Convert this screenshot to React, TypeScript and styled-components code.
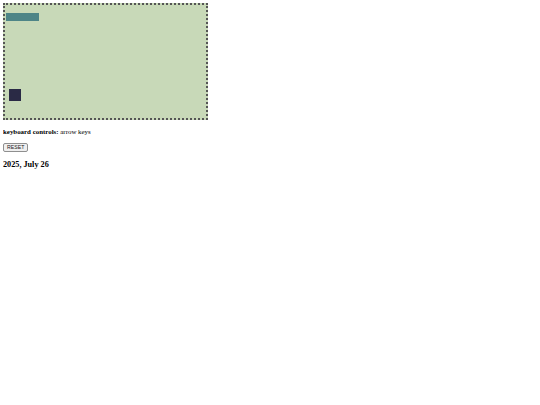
import React, { useState, useEffect } from "react";
import styled, { createGlobalStyle } from "styled-components";

const GlobalStyle = createGlobalStyle`
  body {
    margin: 3px;
    font-family: "Liberation Serif", "Times New Roman", serif;
    color: #000;
    background: #fff;
  }
`;

export default function App() {
  const [pos, setPos] = useState({ x: 4, y: 84 });

  useEffect(() => {
    const onKey = (e: KeyboardEvent) => {
      const step = 4;
      setPos((p) => {
        if (e.key === "ArrowLeft") return { ...p, x: Math.max(0, p.x - step) };
        if (e.key === "ArrowRight") return { ...p, x: Math.min(189, p.x + step) };
        if (e.key === "ArrowUp") return { ...p, y: Math.max(0, p.y - step) };
        if (e.key === "ArrowDown") return { ...p, y: Math.min(100, p.y + step) };
        return p;
      });
    };
    window.addEventListener("keydown", onKey);
    return () => window.removeEventListener("keydown", onKey);
  }, []);

  return (
    <>
      <GlobalStyle />
      <Board>
        <Platform />
        <Player style={{ left: pos.x, top: pos.y }} />
      </Board>
      <Controls>
        <b>keyboard controls:</b> arrow keys
      </Controls>
      <ResetButton onClick={() => setPos({ x: 4, y: 84 })}>RESET</ResetButton>
      <DateLine>2025, July 26</DateLine>
    </>
  );
}

const Board = styled.div`
  position: relative;
  width: 201px;
  height: 113px;
  border: 2px dotted #555;
  background-color: #c8d9b8;
`;

const Platform = styled.div`
  position: absolute;
  left: 1px;
  top: 8px;
  width: 33px;
  height: 8px;
  background-color: #4e8587;
`;

const Player = styled.div`
  position: absolute;
  width: 12px;
  height: 12px;
  background-color: #2a2a45;
`;

const Controls = styled.p`
  font-size: 6.9px;
  line-height: 8px;
  margin: 8px 0 7px;
`;

const ResetButton = styled.button`
  display: block;
  font-family: "Liberation Sans", Arial, sans-serif;
  font-size: 5.2px;
  padding: 0 3px;
  height: 9px;
  line-height: 7px;
  border: 1px solid #8f8f8f;
  border-radius: 2px;
  background: #efefef;
  color: #222;
`;

const DateLine = styled.h3`
  font-size: 8.2px;
  line-height: 10px;
  margin: 8px 0 0;
`;
